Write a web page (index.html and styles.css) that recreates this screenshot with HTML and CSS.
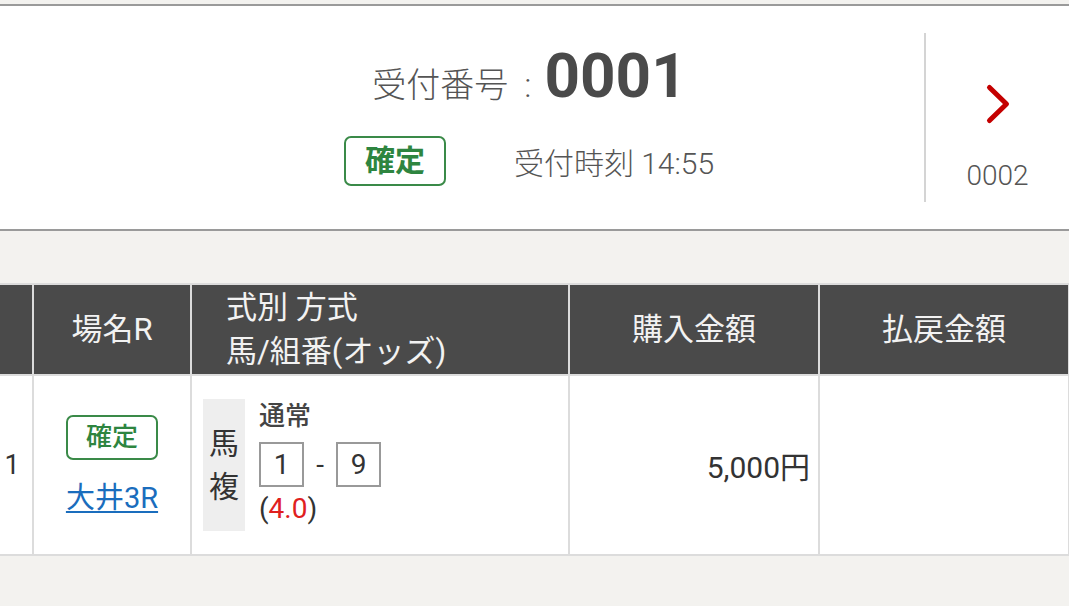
FILE: index.html
```html
<!DOCTYPE html>
<html lang="ja">
<head>
  <meta charset="UTF-8" />
  <meta name="viewport" content="width=device-width, initial-scale=1.0"/>
  <title>受付照会</title>
  <link rel="stylesheet" href="styles.css">
</head>
<body>

  <div class="receipt-card">
    <div class="nav-prev"></div>
    <div class="receipt-main">
      <div class="receipt-no">
        <span class="receipt-label">受付番号</span>
        <span class="receipt-colon">:</span>
        <span class="receipt-num">0001</span>
      </div>
      <div class="receipt-meta">
        <span class="status-badge">確定</span>
        <span class="receipt-time">受付時刻 14:55</span>
      </div>
    </div>
    <a class="nav-next" href="#">
      <svg class="chevron" width="26" height="44" viewBox="0 0 26 44">
        <polyline points="4.5,5.5 21.5,22 4.5,38.5" />
      </svg>
      <span class="nav-num">0002</span>
    </a>
  </div>

  <table class="bet-table">
    <colgroup>
      <col class="col-no">
      <col class="col-race">
      <col class="col-bet">
      <col class="col-amount">
      <col class="col-amount">
    </colgroup>
    <thead>
      <tr>
        <th></th>
        <th>場名R</th>
        <th class="th-bet">式別 方式<br>馬/組番(オッズ)</th>
        <th>購入金額</th>
        <th>払戻金額</th>
      </tr>
    </thead>
    <tbody>
      <tr>
        <td class="cell-no">1</td>
        <td class="cell-race">
          <span class="race-badge">確定</span>
          <a class="race-link" href="#">大井3R</a>
        </td>
        <td class="cell-bet">
          <div class="bet-detail">
            <div class="bet-type"><span>馬</span><span>複</span></div>
            <div class="bet-lines">
              <div class="bet-method">通常</div>
              <div class="bet-combo">
                <span class="horse-box">1</span>
                <span class="dash">-</span>
                <span class="horse-box">9</span>
              </div>
              <div class="bet-odds">(<em>4.0</em>)</div>
            </div>
          </div>
        </td>
        <td class="cell-amount">5,000円</td>
        <td class="cell-amount"></td>
      </tr>
    </tbody>
  </table>

</body>
</html>
```

FILE: styles.css
```css
body {
  margin: 0;
  padding-top: 4px;
  background-color: #f3f2ef;
  font-family: Roboto, "Noto Sans CJK JP", sans-serif;
  color: #333;
  overflow: hidden;
}

/* receipt header card */
.receipt-card {
  display: grid;
  grid-template-columns: 134px 1fr 145px;
  grid-template-rows: 169px;
  background-color: #fff;
  border-top: 2px solid #9a9a9a;
  border-bottom: 2px solid #9a9a9a;
  padding: 27px 0;
}

.receipt-main {
  display: flex;
  flex-direction: column;
  align-items: center;
}

.receipt-no {
  display: flex;
  align-items: baseline;
  margin-top: 7px;
  margin-left: 1px;
  height: 72px;
  color: #555;
}

.receipt-label {
  font-size: 34px;
  font-weight: 300;
}

.receipt-colon {
  font-size: 34px;
  font-weight: 300;
  margin-left: 16px;
}

.receipt-num {
  font-size: 62px;
  font-weight: 700;
  color: #4a4a4a;
  margin-left: 13px;
  line-height: 72px;
}

.receipt-meta {
  display: flex;
  align-items: center;
  gap: 68px;
  margin-top: 24px;
}

.status-badge {
  display: inline-block;
  box-sizing: border-box;
  height: 50px;
  line-height: 46px;
  padding: 0 19px;
  border: 2px solid #3a8a48;
  border-radius: 7px;
  color: #2e8540;
  font-size: 30px;
  font-weight: 700;
}

.receipt-time {
  font-size: 30px;
  font-weight: 300;
  color: #555;
}

.nav-next {
  display: flex;
  flex-direction: column;
  align-items: center;
  border-left: 2px solid #d4d4d4;
  padding-top: 49px;
  text-decoration: none;
}

.chevron polyline {
  fill: none;
  stroke: #c40000;
  stroke-width: 5;
  stroke-linecap: round;
  stroke-linejoin: round;
}

.nav-num {
  margin-top: 33px;
  font-size: 28px;
  font-weight: 300;
  color: #555;
}

/* bet table */
.bet-table {
  border-collapse: collapse;
  table-layout: fixed;
  width: 1078px;
  margin-top: 52px;
  margin-left: -10px;
}

.col-no { width: 42px; }
.col-race { width: 158px; }
.col-bet { width: 378px; }
.col-amount { width: 250px; }

th, td {
  border: 2px solid #dcdcdc;
  padding: 0;
}

th {
  height: 89px;
  background-color: #4a4a4a;
  color: #f2f2f2;
  font-size: 31px;
  font-weight: 400;
  line-height: 44px;
}

.th-bet {
  text-align: left;
  padding-left: 34px;
}

td {
  height: 178px;
  background-color: #fff;
  vertical-align: middle;
}

.cell-no {
  text-align: center;
  font-size: 27px;
}

.cell-race {
  text-align: center;
}

.race-badge {
  display: inline-block;
  box-sizing: border-box;
  height: 45px;
  line-height: 41px;
  padding: 0 18px;
  border: 2px solid #3a8a48;
  border-radius: 7px;
  color: #2e8540;
  font-size: 26px;
  font-weight: 500;
}

.race-link {
  display: block;
  margin-top: 14px;
  font-size: 29px;
  color: #1a6dbd;
  text-decoration-thickness: 2px;
  text-underline-offset: 3px;
}

.bet-detail {
  display: flex;
  padding-left: 11px;
}

.bet-type {
  width: 42px;
  display: flex;
  flex-direction: column;
  justify-content: center;
  align-items: center;
  background-color: #eee;
  font-size: 30px;
  line-height: 43px;
  color: #333;
}

.bet-lines {
  margin-left: 14px;
}

.bet-method {
  font-size: 26px;
  font-weight: 500;
  line-height: 34px;
  color: #444;
}

.bet-combo {
  display: flex;
  align-items: center;
  margin-top: 9px;
}

.horse-box {
  box-sizing: border-box;
  width: 45px;
  height: 45px;
  border: 2px solid #999;
  text-align: center;
  line-height: 41px;
  font-size: 28px;
}

.dash {
  width: 32px;
  text-align: center;
  font-size: 28px;
}

.bet-odds {
  font-size: 28px;
  line-height: 44px;
}

.bet-odds em {
  font-style: normal;
  color: #e0201e;
}

.cell-amount {
  text-align: right;
  padding-right: 8px;
  font-size: 30px;
}
```
